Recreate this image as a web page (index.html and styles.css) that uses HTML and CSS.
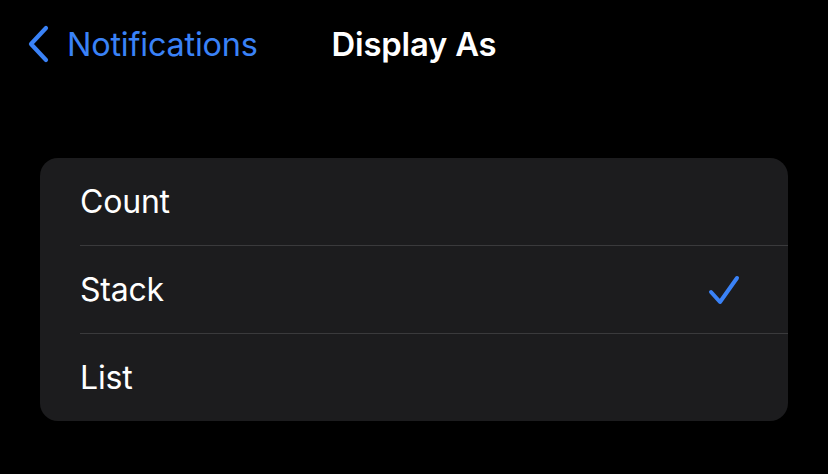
FILE: index.html
```html
<!DOCTYPE html>
<html>
<head>
<meta charset="utf-8">
<link rel="stylesheet" href="styles.css">
</head>
<body>
<div class="screen">
  <header class="nav">
    <a class="back">
      <svg class="chev" width="24" height="38" viewBox="0 0 24 38"><path d="M20 3 L5 19 L20 35" fill="none" stroke="#3a82f7" stroke-width="4.2" stroke-linecap="round" stroke-linejoin="round"/></svg>
      <span class="back-label">Notifications</span>
    </a>
    <h1 class="title">Display As</h1>
  </header>
  <section class="group">
    <div class="row"><span class="label">Count</span></div>
    <div class="row"><span class="label">Stack</span>
      <svg class="check" width="32" height="30" viewBox="0 0 32 30"><path d="M3 17 L12 27 L29 3" fill="none" stroke="#3a82f7" stroke-width="4" stroke-linecap="round" stroke-linejoin="round"/></svg>
    </div>
    <div class="row"><span class="label">List</span></div>
  </section>
</div>
</body>
</html>
```
FILE: styles.css
```css
html, body {
  margin: 0;
  padding: 0;
  background: #000;
}
.screen {
  width: 828px;
  height: 474px;
  background: #000;
  font-family: Inter, "Noto Sans", sans-serif;
  color: #fff;
}
.nav {
  height: 88px;
  display: flex;
  align-items: center;
  padding-left: 26px;
  box-sizing: border-box;
}
.back {
  display: flex;
  align-items: center;
  color: #3a82f7;
}
.chev {
  display: block;
}
.back-label {
  font-size: 32.4px;
  margin-left: 17px;
  letter-spacing: -0.2px;
}
.title {
  margin: 0 0 0 74px;
  font-size: 32.8px;
  font-weight: 600;
  letter-spacing: -0.2px;
}
.group {
  margin: 70px 40px 0 40px;
  background: #1c1c1e;
  border-radius: 18px;
  overflow: hidden;
}
.row {
  height: 87px;
  margin-left: 40px;
  padding-right: 48px;
  display: flex;
  align-items: center;
  justify-content: space-between;
  border-top: 1px solid #3a3a3c;
}
.row:first-child {
  border-top: none;
}
.label {
  font-size: 32px;
  letter-spacing: -0.2px;
}
.check {
  display: block;
}
```
